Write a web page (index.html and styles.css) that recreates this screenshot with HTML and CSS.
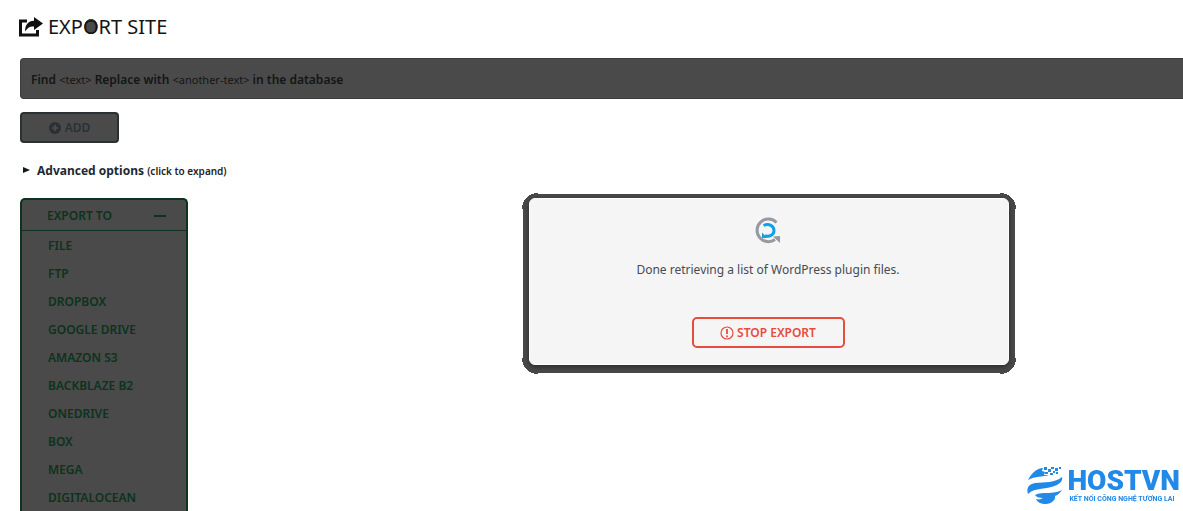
FILE: index.html
```html
<!DOCTYPE html>
<html lang="en">
<head>
<meta charset="utf-8">
<title>Export Site</title>
<link rel="stylesheet" href="styles.css">
</head>
<body>
<main class="page">
  <h1 class="title">
    <svg class="title-icon" viewBox="0 0 24 20" aria-hidden="true"><path d="M8 4H1.500v14h17v-5" fill="none" stroke="#111" stroke-width="3"/><path d="M15 0l9 6.500-9 6.500V9.500c-4-.2-6 1-9 5C6 8 9 4 15 3.800z" fill="#111"/></svg>
    <span>EXP<span class="filled">O</span>RT SITE</span>
  </h1>
  <section class="replace"><strong>Find</strong> <small>&lt;text&gt;</small> <strong>Replace with</strong> <small>&lt;another-text&gt;</small> <strong>in the database</strong></section>
  <button class="add" type="button">
    <svg class="add-icon" viewBox="0 0 12 12" aria-hidden="true"><circle cx="6" cy="6" r="6" fill="#2b3133"/><path d="M6 3v6M3 6h6" stroke="#4a4a4a" stroke-width="2"/></svg>
    ADD
  </button>
  <details class="advanced">
    <summary><svg class="marker" viewBox="0 0 8 8" aria-hidden="true"><path d="M0 0l7 3-7 3z" fill="#111a20"/></svg><span>Advanced options <small>(click to expand)</small></span></summary>
  </details>
  <nav class="export">
    <button class="export-head" type="button">EXPORT TO <span class="minus"></span></button>
    <ul class="export-list">
      <li><a href="#file">FILE</a></li>
      <li><a href="#ftp">FTP</a></li>
      <li><a href="#dropbox">DROPBOX</a></li>
      <li><a href="#gdrive">GOOGLE DRIVE</a></li>
      <li><a href="#s3">AMAZON S3</a></li>
      <li><a href="#b2">BACKBLAZE B2</a></li>
      <li><a href="#onedrive">ONEDRIVE</a></li>
      <li><a href="#box">BOX</a></li>
      <li><a href="#mega">MEGA</a></li>
      <li><a href="#digitalocean">DIGITALOCEAN</a></li>
    </ul>
  </nav>
</main>

<div class="overlay">
  <div class="frame">
    <section class="modal" role="dialog" aria-label="Export progress">
      <svg class="spinner" viewBox="0 0 28 28" aria-hidden="true"><path d="M22.500 6.500A11.300 11.300 0 1 0 21 23.500" fill="none" stroke="#96999e" stroke-width="3"/><path d="M19 20.500l7-.5v7z" fill="#96999e"/><path d="M9.500 9.500C15 7 20 10 20 14.500 20 19 15 21.500 11 19.500" fill="none" stroke="#11a0e6" stroke-width="3"/><path d="M8 16.500v5.500h5.500z" fill="#11a0e6"/></svg>
      <p class="message">Done retrieving a list of WordPress plugin files.</p>
      <button class="stop" type="button">
        <svg class="stop-icon" viewBox="0 0 14 14" aria-hidden="true"><circle cx="7" cy="7" r="6" fill="none" stroke="#e74c3c" stroke-width="1.200"/><path d="M7 3v5M7 9.500v1.700" stroke="#e74c3c" stroke-width="1.800"/></svg>
        STOP EXPORT
      </button>
    </section>
  </div>
</div>

<a class="brand" href="#hostvn">
  <svg class="brand-icon" viewBox="0 0 36 38" aria-hidden="true">
    <g fill="#2189e8"><path d="M1 14C5 6 11 2 16 2l-1 3 3 1-1 3 5 0C16 11 8 10 1 14z"/><path d="M35 11C36 14 34 17 30 19 20 24 8 21 1 28-1 22 2 18 8 17 18 16 28 17 35 11z"/><path d="M35 24C33 27 31 29 28 30 29 34 24 38 19 38 14 38 10 36 9 33 12 34 14 33 16 32 12 32 9 31 8 29 16 25 26 29 35 24z"/>
    <path d="M17 1h3v3h-3zM21 3h3v3h-3zM24 1h3v2h-3zM28 2h3v3h-3zM32 1h2v2h-2zM18 6h3v2h-3zM23 7h3v2h-3zM26 5h2v2h-2zM29 6h2v2h-2z"/></g>
  </svg>
  <span class="brand-text"><span class="brand-name">HOSTVN</span><span class="brand-line">KẾT NỐI CÔNG NGHỆ TƯƠNG LAI</span></span>
</a>
</body>
</html>
```
FILE: styles.css
```css
* { box-sizing: border-box; }
body {
  margin: 0;
  height: 100vh;
  overflow: hidden;
  background: #fff;
  color: #151515;
  font: 12px/20px "Noto Sans", sans-serif;
}
button { font: inherit; cursor: pointer; }
.page {
  display: flex;
  flex-direction: column;
  align-items: flex-start;
  height: 100%;
  padding: 12px 0 0 19px;
}
.page > * { flex-shrink: 0; margin-left: 1px; }
.page > .title {
  display: flex;
  align-items: center;
  gap: 5px;
  margin: 0 0 16px;
  font-size: 20px;
  font-weight: 400;
  line-height: 30px;
}
.title-icon { width: 24px; height: 20px; }
.filled {
  background: radial-gradient(ellipse 7px 8px at center, #4a4a4a 90%, transparent);
}
.replace {
  align-self: stretch;
  padding: 11px 10px 8px;
  border: 1px solid #3c3c3c;
  border-right: 0;
  border-radius: 4px 0 0 4px;
  background: #4a4a4a;
}
.replace strong { font-weight: 600; }
.replace small { font-size: 11px; }
.add {
  display: flex;
  align-items: center;
  justify-content: center;
  gap: 4px;
  width: 99px;
  height: 31px;
  padding: 1px 0 0;
  margin-top: 13px;
  margin-bottom: 18px;
  border: 2px solid #2b3133;
  border-radius: 4px;
  background: #4a4a4a;
  color: #2b3133;
  font-weight: 600;
}
.add-icon { width: 12px; height: 12px; }
.advanced { padding-left: 3px; color: #1b2a33; font-weight: 700; }
.advanced summary { display: flex; align-items: center; gap: 6px; list-style: none; }
.advanced small { color: #222; font-size: 10px; font-weight: 600; }
.marker { width: 8px; height: 8px; }
.page > .export {
  flex: 1 1 0;
  width: 168px;
  min-height: 0;
  margin-top: 17px;
  border: 2px solid #0c331e;
  border-bottom: 0;
  border-radius: 5px 5px 0 0;
  background: #4a4a4a;
  color: #0c331e;
  font-weight: 600;
  overflow: hidden;
}
.export-head {
  display: flex;
  align-items: center;
  justify-content: space-between;
  width: 100%;
  height: 31px;
  padding: 1px 20px 0 25px;
  border: 0;
  border-bottom: 1px solid #0c331e;
  background: none;
  color: inherit;
}
.minus { width: 12px; height: 2px; background: #0c331e; }
.export-list { margin: 0; padding: 1px 0 0; list-style: none; }
.export-list a {
  display: block;
  padding: 4px 26px;
  color: inherit;
  text-decoration: none;
}
.overlay {
  position: fixed;
  inset: 0;
  display: grid;
  place-items: center;
  padding: 56px 0 0 355px;
}
.frame {
  padding: 5px 7px 9px;
  background:
    radial-gradient(circle at 16px 16px, #494949 16px, transparent 16px) 0 0 / 16px 16px,
    radial-gradient(circle at 0 16px, #494949 16px, transparent 16px) 100% 0 / 16px 16px,
    radial-gradient(circle at 16px 0, #494949 16px, transparent 16px) 0 100% / 16px 16px,
    radial-gradient(circle at 0 0, #494949 16px, transparent 16px) 100% 100% / 16px 16px,
    linear-gradient(#494949, #494949) center / calc(100% - 32px) calc(100% - 2px),
    linear-gradient(#494949, #494949) center / calc(100% - 2px) calc(100% - 32px);
  background-repeat: no-repeat;
}
.modal {
  display: flex;
  flex-direction: column;
  align-items: center;
  width: 480px;
  padding: 17px 22px 16px 20px;
  border: 1px solid #fff;
  border-radius: 6px;
  background: #f5f5f5;
  box-shadow: 0 2px 5px #2a2a2a;
}
.spinner { width: 28px; height: 28px; }
.message { margin: 16px 0 37px; color: #464b50; }
.stop {
  display: flex;
  align-items: center;
  justify-content: center;
  gap: 3px;
  width: 153px;
  height: 31px;
  padding: 1px 0 0;
  border: 2px solid #e74c3c;
  border-radius: 5px;
  background: transparent;
  color: #e74c3c;
  font-weight: 600;
}
.stop-icon { width: 14px; height: 14px; }
.brand {
  position: fixed;
  right: 3px;
  bottom: 7px;
  display: flex;
  align-items: center;
  gap: 4px;
  color: #2189e8;
  font-family: Roboto, sans-serif;
  text-decoration: none;
}
.brand-icon { width: 36px; height: 38px; }
.brand-text { display: flex; flex-direction: column; }
.brand-name { font-size: 28px; line-height: 28px; font-weight: 900; }
.brand-line { padding-left: 2px; font-size: 7px; line-height: 8px; font-weight: 700; }
```
